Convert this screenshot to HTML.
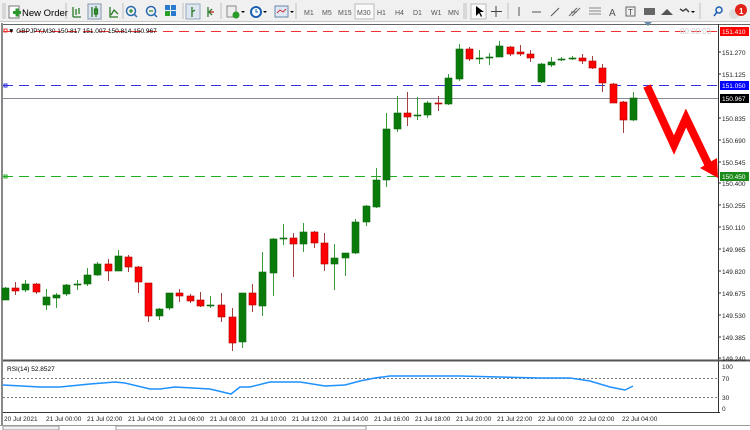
<!DOCTYPE html>
<html><head><meta charset="utf-8"><style>
body{margin:0;width:750px;height:430px;overflow:hidden;background:#f0f0f0;font-family:"Liberation Sans",sans-serif}
svg{display:block}
text{font-family:"Liberation Sans",sans-serif}
</style></head><body>
<svg id="s" width="750" height="430" viewBox="0 0 750 430" xmlns="http://www.w3.org/2000/svg">
<!-- toolbar -->
<rect x="0" y="0" width="750" height="22" fill="#f0f0f0"/>
<line x1="0" y1="21.5" x2="750" y2="21.5" stroke="#c8c8c8"/>
<g stroke="#c0c0c0">
<line x1="3" y1="3" x2="3" y2="19"/><line x1="5" y1="3" x2="5" y2="19"/>
<line x1="66" y1="3" x2="66" y2="19"/><line x1="123" y1="3" x2="123" y2="19"/>
<line x1="183" y1="3" x2="183" y2="19"/><line x1="221" y1="3" x2="221" y2="19"/>
<line x1="296" y1="3" x2="296" y2="19"/><line x1="464" y1="3" x2="464" y2="19"/><line x1="466" y1="3" x2="466" y2="19"/>
<line x1="508" y1="3" x2="508" y2="19"/><line x1="700" y1="3" x2="700" y2="19"/>
</g>
<rect x="9" y="6" width="10" height="12" fill="#fff" stroke="#777"/>
<rect x="13" y="11" width="8" height="3" fill="#2a9a2a"/><rect x="15.5" y="8.5" width="3" height="8" fill="#2a9a2a"/>
<text x="22" y="16" font-size="9.5" fill="#000">New Order</text>
<g stroke="#2a7a2a" stroke-width="1.3" fill="none">
<path d="M73 7v10M73 17h8M76 9v6M79 8v6"/>
<rect x="88" y="4" width="13" height="15" fill="#dde6f0" stroke="#9ab"/>
<path d="M92 7v10M96 6v11" stroke="#2a7a2a"/><rect x="94.5" y="9" width="3" height="5" fill="#2a9a2a"/>
<path d="M110 7v10h8M111 15l3-5 4 4"/>
</g>
<g fill="none" stroke="#2a6ab0" stroke-width="1.5">
<circle cx="131" cy="11" r="4.5"/><path d="M134 14l3 3"/>
<circle cx="151" cy="11" r="4.5"/><path d="M154 14l3 3"/>
</g>
<path d="M129 11h4M131 9v4M149 11h4" stroke="#2a8a2a" stroke-width="1.3"/>
<rect x="165" y="5" width="5" height="5" fill="#2a7ad0"/><rect x="171" y="5" width="5" height="5" fill="#2a7ad0"/><rect x="165" y="11" width="5" height="5" fill="#2aa02a"/><rect x="171" y="11" width="5" height="5" fill="#2a7ad0"/>
<rect x="186" y="4" width="14" height="15" fill="#dde6f0" stroke="#9ab"/>
<path d="M192 7v10M192 12l3-2" stroke="#2a7a2a" stroke-width="1.3" fill="none"/>
<path d="M208 7v10M212 9l-3 3 3 3" stroke="#2a7a2a" stroke-width="1.3" fill="none"/><path d="M210 12h4" stroke="#c22" stroke-width="1.3"/>
<rect x="227" y="6" width="9" height="11" fill="#eee" stroke="#888"/><circle cx="236" cy="15" r="3.5" fill="#2a9a2a"/><path d="M241 11l2 2 2-2z" fill="#000"/>
<circle cx="256" cy="12" r="5" fill="#fff" stroke="#1a5fb4" stroke-width="2"/><path d="M256 9v3h2" stroke="#1a5fb4" fill="none"/><path d="M263 11l2 2 2-2z" fill="#000"/>
<rect x="275" y="6" width="13" height="11" fill="#dfe8f4" stroke="#6688aa"/><path d="M277 13l3-3 3 2 3-3" stroke="#c33" fill="none"/><path d="M290 11l2 2 2-2z" fill="#000"/>
<g font-size="7" fill="#555">
<text x="304" y="15">M1</text><text x="322" y="15">M5</text><text x="338" y="15">M15</text>
<rect x="355" y="4" width="19" height="15" fill="#fafafa" stroke="#bbb"/><text x="357" y="15">M30</text>
<text x="377" y="15">H1</text><text x="395" y="15">H4</text><text x="413" y="15">D1</text><text x="431" y="15">W1</text><text x="448" y="15">MN</text>
</g>
<rect x="471" y="4" width="15" height="15" fill="#fafafa" stroke="#bbb"/>
<path d="M476 6v10l3-3 2 4 1-1-2-4h4z" fill="#000"/>
<path d="M496 6v11M491 11.5h11" stroke="#444"/>
<path d="M519 7v9" stroke="#555"/><path d="M532 12h9" stroke="#555"/><path d="M551 16l8-8" stroke="#555"/>
<path d="M569 16l8-8M572 16l8-8M571 12l6 0" stroke="#666"/>
<path d="M589 8h12M589 11h12M589 14h12" stroke="#888"/>
<text x="609" y="16" font-size="10" fill="#555">A</text>
<rect x="626" y="7" width="9" height="9" fill="none" stroke="#666"/><text x="628" y="15" font-size="8" fill="#444">T</text>
<rect x="644" y="8" width="11" height="7" fill="#666"/>
<path d="M661 15l6-6 6 6z" fill="#555"/>
<path d="M680 9l3 2 3-2 3 3" stroke="#444" fill="none" stroke-width="1.5"/><path d="M691 11l2 2 2-2z" fill="#000"/>
<circle cx="719" cy="10" r="3" fill="none" stroke="#1a5fb4" stroke-width="1.5"/><path d="M717 12l-3 4" stroke="#1a5fb4" stroke-width="1.5"/>
<circle cx="734" cy="14" r="5" fill="#ddd"/><circle cx="741" cy="10" r="6" fill="#e2231a"/><text x="739" y="14" font-size="8" fill="#fff" font-weight="bold">1</text>

<!-- chart area -->
<rect x="0" y="22" width="750" height="408" fill="#fff"/>
<rect x="1" y="23" width="2" height="402" fill="#888"/>
<line x1="3" y1="24.5" x2="750" y2="24.5" stroke="#666"/>
<line x1="718.5" y1="24" x2="718.5" y2="413" stroke="#333"/>
<line x1="3" y1="360.5" x2="750" y2="360.5" stroke="#555" stroke-width="2"/>
<line x1="3" y1="412.5" x2="720" y2="412.5" stroke="#333"/>
<line x1="0" y1="425.5" x2="750" y2="425.5" stroke="#999"/>
<rect x="3" y="426" width="56" height="4" fill="#f0f0f0" stroke="#999"/><rect x="116" y="426" width="250" height="4" fill="#fff" stroke="#999"/>
<path d="M644 22l4 4 4-4z" fill="#6a8aaa"/>

<!-- level lines -->
<line x1="3" y1="31.5" x2="718" y2="31.5" stroke="#e33" stroke-dasharray="10,6"/>
<line x1="3" y1="85.5" x2="718" y2="85.5" stroke="#33d" stroke-dasharray="10,6"/>
<line x1="3" y1="98.5" x2="718" y2="98.5" stroke="#889"/>
<line x1="3" y1="176.5" x2="718" y2="176.5" stroke="#2a2" stroke-dasharray="10,6"/>
<rect x="4" y="29" width="3" height="3" fill="none" stroke="#e33"/>
<rect x="4" y="84" width="3" height="3" fill="none" stroke="#33d"/>
<rect x="4" y="175" width="3" height="3" fill="none" stroke="#2a2"/>
<text x="8" y="33" font-size="6.5" fill="#000">▼ GBPJPY,M30  150.817 151.007 150.814 150.967</text>
<text x="680" y="34" font-size="8" fill="#ccc">00:00:03</text>

<g id="candles"></g>

<!-- arrow -->
<polyline points="647,86 674,145 686,118 709,166" fill="none" stroke="#f00" stroke-width="8" stroke-linejoin="miter"/>
<path d="M700 168l18 10-1-20z" fill="#f00"/>

<!-- price axis -->
<g font-size="6.5" fill="#222">
<text x="722" y="55">151.270</text><text x="722" y="77">151.125</text>
<text x="722" y="121">150.835</text><text x="722" y="143">150.690</text><text x="722" y="165">150.545</text>
<text x="722" y="186">150.400</text><text x="722" y="208">150.255</text><text x="722" y="230">150.110</text>
<text x="722" y="252">149.965</text><text x="722" y="274">149.820</text><text x="722" y="296">149.675</text>
<text x="722" y="318">149.530</text><text x="722" y="340">149.385</text><text x="722" y="361">149.240</text>
</g>
<g stroke="#333"><path d="M718 52h3M718 74h3M718 118h3M718 140h3M718 162h3M718 183h3M718 205h3M718 227h3M718 249h3M718 271h3M718 293h3M718 315h3M718 337h3M718 358h3"/></g>
<rect x="720" y="27" width="29" height="9" fill="#f00"/><text x="722" y="34" font-size="6.5" fill="#fff">151.410</text>
<rect x="720" y="81" width="29" height="9" fill="#00f"/><text x="722" y="88" font-size="6.5" fill="#fff">151.050</text>
<rect x="720" y="94" width="29" height="9" fill="#000"/><text x="722" y="101" font-size="6.5" fill="#fff">150.967</text>
<rect x="720" y="172" width="29" height="9" fill="#1a8a1a"/><text x="722" y="179" font-size="6.5" fill="#fff">150.450</text>

<!-- RSI -->
<text x="7" y="371" font-size="6.5" fill="#000">RSI(14) 52.8527</text>
<line x1="3" y1="378.5" x2="718" y2="378.5" stroke="#777" stroke-dasharray="2,2"/>
<line x1="3" y1="397.5" x2="718" y2="397.5" stroke="#777" stroke-dasharray="2,2"/>
<polyline fill="none" stroke="#1e90ff" stroke-width="1.5" points="3,385 40,387 60,387 90,384 115,382 125,383 150,389 160,389 175,387 210,389 231,394 240,387 250,387 270,382 300,382 325,386 345,385 360,381 375,378 390,376 460,376 500,377 540,378 570,378 590,381 610,387 625,390 633,386"/>
<g font-size="6.5" fill="#222"><text x="722" y="369">100</text><text x="722" y="381">70</text><text x="722" y="400">30</text><text x="722" y="411">0</text></g>

<!-- time axis -->
<g font-size="6.5" fill="#222">
<text x="4" y="421">20 Jul 2021</text><text x="46" y="421">21 Jul 00:00</text><text x="87" y="421">21 Jul 02:00</text>
<text x="128" y="421">21 Jul 04:00</text><text x="169" y="421">21 Jul 06:00</text><text x="210" y="421">21 Jul 08:00</text>
<text x="251" y="421">21 Jul 10:00</text><text x="292" y="421">21 Jul 12:00</text><text x="333" y="421">21 Jul 14:00</text>
<text x="374" y="421">21 Jul 16:00</text><text x="415" y="421">21 Jul 18:00</text><text x="456" y="421">21 Jul 20:00</text>
<text x="497" y="421">21 Jul 22:00</text><text x="538" y="421">22 Jul 00:00</text><text x="579" y="421">22 Jul 02:00</text>
<text x="622" y="421">22 Jul 04:00</text>
</g>
</svg>
<script>
var d=[
[5,'g',288,300,287,300],[15,'r',288,291,282,295],[25,'g',284,290,280,292],[36,'r',284,292,283,294],
[46,'g',297,305,289,310],[56,'g',295,298,293,308],[66,'g',285,294,284,296],[77,'g',284,285,280,290],
[87,'g',275,284,268,286],[97,'g',264,275,262,276],[108,'r',264,271,259,281],[118,'g',256,271,250,271],
[128,'r',257,267,255,272],[138,'r',267,282,266,293],[148,'r',283,316,283,322],[159,'g',309,316,308,320],
[169,'g',293,308,293,310],[179,'r',293,296,289,302],[190,'r',296,301,294,303],[200,'r',300,306,292,307],
[210,'g',305,306,296,308],[221,'r',305,317,293,322],[232,'r',317,343,308,351],[242,'g',293,342,293,348],
[252,'r',293,305,284,312],[262,'g',272,306,252,316],[273,'g',239,273,238,296],[283,'g',238,239,224,245],
[293,'r',238,244,233,277],[303,'g',232,244,223,252],[314,'r',232,243,231,248],[324,'r',243,264,233,271],
[334,'g',258,264,244,290],[345,'g',253,258,253,276],[355,'g',222,253,219,254],[366,'g',206,222,205,226],
[376,'g',180,207,168,208],[386,'g',129,180,113,187],[397,'g',113,129,96,132],[407,'r',113,117,92,126],
[417,'g',115,116,97,120],[427,'g',103,115,101,118],[438,'r',103,104,96,111],[448,'g',78,104,74,105],
[459,'g',49,79,44,81],[469,'r',49,59,47,61],[479,'g',58,58,50,64],[489,'g',57,58,53,65],
[499,'g',46,57,41,57],[510,'r',47,54,46,56],[520,'r',52,54,45,56],[530,'r',54,58,50,62],
[541,'g',64,82,63,83],[551,'g',62,65,57,67],[561,'g',59,60,57,61],[572,'g',58,59,56,60],
[582,'r',58,61,54,64],[592,'r',61,68,56,69],[602,'r',68,83,64,92],[613,'r',84,103,83,103],
[623,'r',102,120,101,133],[633,'g',98,120,92,121]];
var h='';d.forEach(function(c){var x=c[0],g=c[1]=='g',t=c[2],b=Math.max(c[3],t+1);
h+='<line x1="'+(x+.5)+'" y1="'+c[4]+'" x2="'+(x+.5)+'" y2="'+c[5]+'" stroke="'+(g?'#3a9a3a':'#a04040')+'"/>';
h+='<rect x="'+(x-3)+'" y="'+t+'" width="7" height="'+(b-t)+'" fill="'+(g?'#0a7a0a':'#f00')+'" stroke="'+(g?'#0a6a0a':'#a00')+'" stroke-width="0.6"/>';});
document.getElementById('candles').innerHTML=h;
</script>
</body></html>
